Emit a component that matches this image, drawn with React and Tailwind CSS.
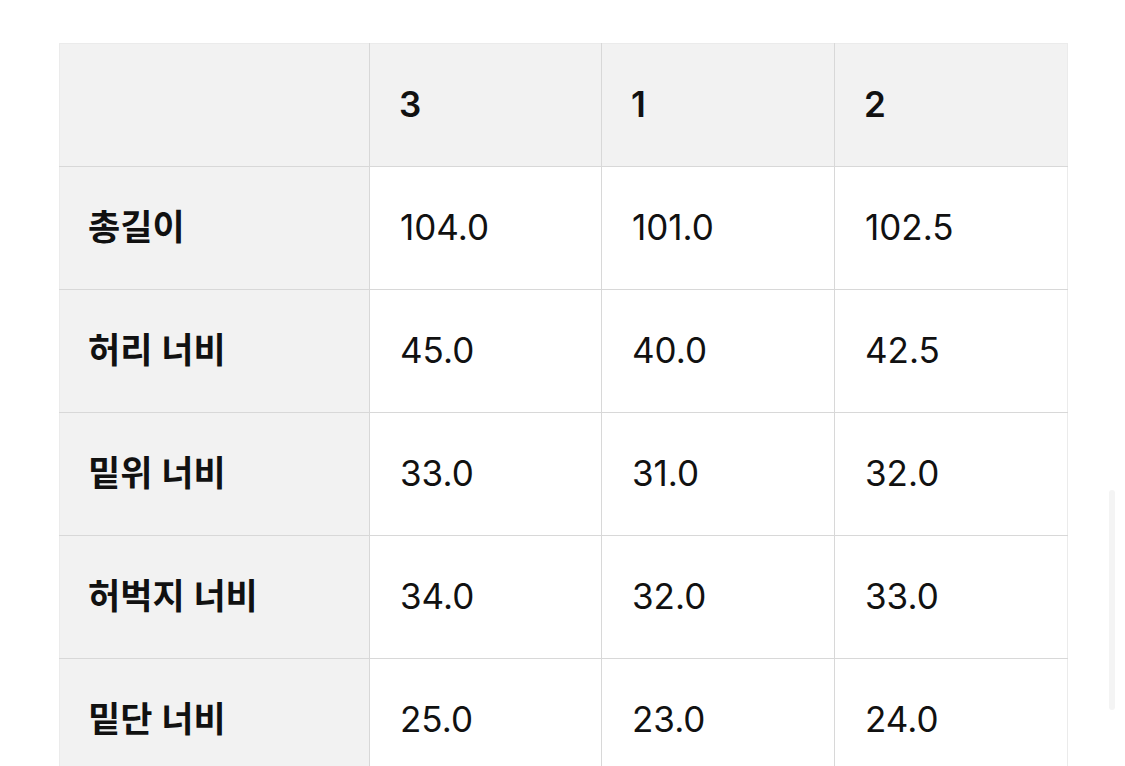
import React from 'react';

const headers = ['3', '1', '2'];

const rows = [
  { label: '총길이', values: ['104.0', '101.0', '102.5'] },
  { label: '허리 너비', values: ['45.0', '40.0', '42.5'] },
  { label: '밑위 너비', values: ['33.0', '31.0', '32.0'] },
  { label: '허벅지 너비', values: ['34.0', '32.0', '33.0'] },
  { label: '밑단 너비', values: ['25.0', '23.0', '24.0'] },
];

const font = { fontFamily: 'Inter, "Noto Sans CJK KR", sans-serif' };

const App = () => {
  return (
    <div className="relative h-[766px] w-[1125px] overflow-hidden bg-white" style={font}>
      <div className="pl-[59px] pt-[43px]">
        <table className="border-collapse text-[35px] text-[#111111]">
          <colgroup>
            <col className="w-[310px]" />
            <col className="w-[232px]" />
            <col className="w-[233px]" />
            <col className="w-[233px]" />
          </colgroup>
          <thead>
            <tr className="h-[123px] bg-[#f2f2f2]">
              <th className="border-t border-l border-[#ebebeb] border-r-[#d8d8d8] border-b-[#d8d8d8] border-r border-b"></th>
              {headers.map((h, i) => (
                <th
                  key={h}
                  className={`border-t border-b border-[#ebebeb] border-b-[#d8d8d8] pl-[29px] pb-[2px] text-left font-semibold ${i === 2 ? 'border-r border-r-[#ebebeb]' : 'border-r border-r-[#d8d8d8]'}`}
                >
                  {h}
                </th>
              ))}
            </tr>
          </thead>
          <tbody>
            {rows.map((row) => (
              <tr key={row.label} className="h-[123px]">
                <td className="border-l border-[#ebebeb] border-r border-r-[#d8d8d8] border-b border-b-[#d8d8d8] bg-[#f2f2f2] pl-[28px] pb-[2px] font-semibold">
                  {row.label}
                </td>
                {row.values.map((v, i) => (
                  <td
                    key={i}
                    className={`border-b border-b-[#d8d8d8] pl-[30px] pb-[2px] font-normal ${i === 2 ? 'border-r border-r-[#ebebeb]' : 'border-r border-r-[#d8d8d8]'}`}
                  >
                    {v}
                  </td>
                ))}
              </tr>
            ))}
          </tbody>
        </table>
      </div>
      <div className="absolute left-[1109px] top-[490px] h-[220px] w-[6px] rounded-full bg-[#f4f4f4]"></div>
    </div>
  );
};

export default App;
